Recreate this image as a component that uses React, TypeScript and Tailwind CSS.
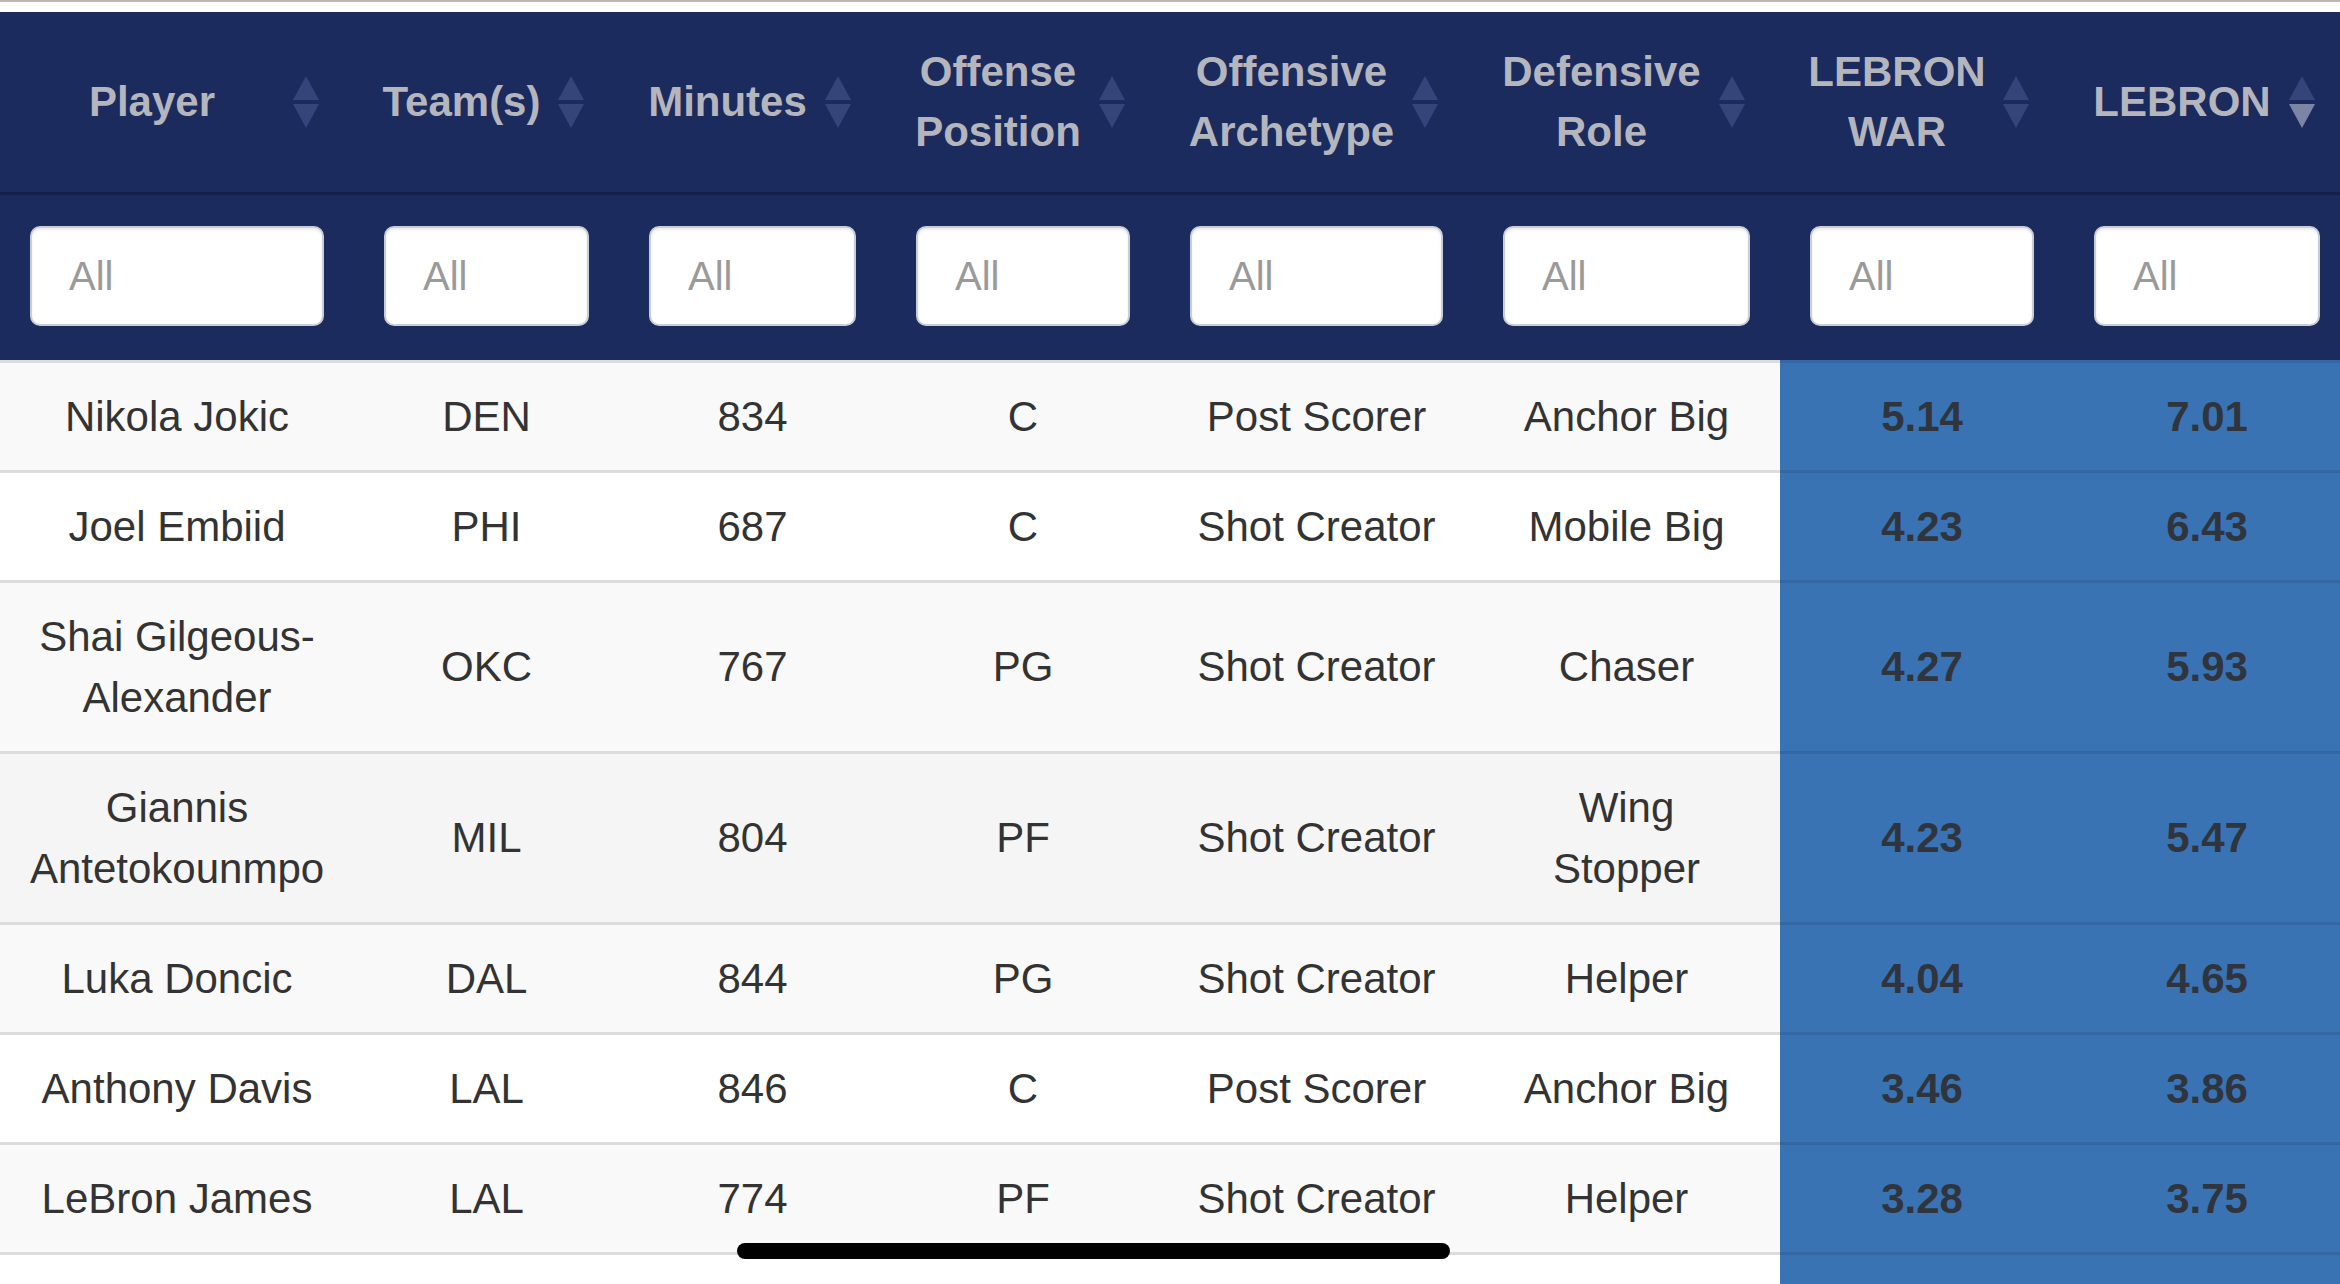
import React from "react";

type Col = { title: string[]; width: number; hl?: boolean; sort?: "desc" };

const cols: Col[] = [
  { title: ["Player"], width: 354 },
  { title: ["Team(s)"], width: 265 },
  { title: ["Minutes"], width: 267 },
  { title: ["Offense", "Position"], width: 274 },
  { title: ["Offensive", "Archetype"], width: 313 },
  { title: ["Defensive", "Role"], width: 307 },
  { title: ["LEBRON", "WAR"], width: 284, hl: true },
  { title: ["LEBRON"], width: 286, hl: true, sort: "desc" },
];

const rows: string[][][] = [
  [["Nikola Jokic"], ["DEN"], ["834"], ["C"], ["Post Scorer"], ["Anchor Big"], ["5.14"], ["7.01"]],
  [["Joel Embiid"], ["PHI"], ["687"], ["C"], ["Shot Creator"], ["Mobile Big"], ["4.23"], ["6.43"]],
  [["Shai Gilgeous-", "Alexander"], ["OKC"], ["767"], ["PG"], ["Shot Creator"], ["Chaser"], ["4.27"], ["5.93"]],
  [["Giannis", "Antetokounmpo"], ["MIL"], ["804"], ["PF"], ["Shot Creator"], ["Wing", "Stopper"], ["4.23"], ["5.47"]],
  [["Luka Doncic"], ["DAL"], ["844"], ["PG"], ["Shot Creator"], ["Helper"], ["4.04"], ["4.65"]],
  [["Anthony Davis"], ["LAL"], ["846"], ["C"], ["Post Scorer"], ["Anchor Big"], ["3.46"], ["3.86"]],
  [["LeBron James"], ["LAL"], ["774"], ["PF"], ["Shot Creator"], ["Helper"], ["3.28"], ["3.75"]],
  [["\u00a0"], ["\u00a0"], ["\u00a0"], ["\u00a0"], ["\u00a0"], ["\u00a0"], ["\u00a0"], ["\u00a0"]],
];

function SortIcon({ active }: { active?: "desc" }) {
  return (
    <svg width="26" height="52" viewBox="0 0 26 52" className="shrink-0">
      <polygon points="13,0 26,24 0,24" fill="#35457a" />
      <polygon points="0,28 26,28 13,52" fill={active === "desc" ? "#7c85a6" : "#35457a"} />
    </svg>
  );
}

function Lines({ lines }: { lines: string[] }) {
  return (
    <>
      {lines.map((l, i) => (
        <div key={i} className="whitespace-nowrap">
          {l}
        </div>
      ))}
    </>
  );
}

export default function App() {
  return (
    <div
      className="relative w-[2340px] h-[1284px] overflow-hidden bg-white"
      style={{ fontFamily: '"Liberation Sans", Arial, Helvetica, sans-serif' }}
    >
      <div className="h-[12px] border-t-2 border-[#b8b8b8] bg-white" />
      <table className="table-fixed border-collapse w-[2350px]">
        <colgroup>
          {cols.map((c, i) => (
            <col key={i} style={{ width: c.width }} />
          ))}
        </colgroup>
        <thead className="bg-[#1b2b5e]">
          <tr className="border-b-[3px] border-[#13204a]">
            {cols.map((c, i) => (
              <th key={i} className="h-[181px] pl-[28px] pr-[35px] py-0 font-bold">
                <div className="flex items-center gap-[17px]">
                  <div className="flex-1 text-center text-[42px] leading-[60px] text-[#b4b5bd]">
                    <Lines lines={c.title} />
                  </div>
                  <SortIcon active={c.sort} />
                </div>
              </th>
            ))}
          </tr>
          <tr className="border-b-[3px] border-[#13204a]">
            {cols.map((c, i) => (
              <th key={i} className="px-[30px] pt-[31px] pb-[34px]">
                <div className="h-[100px] rounded-[10px] border-2 border-[#c9cdd8] bg-white shadow-[inset_0_2px_3px_rgba(0,0,0,0.08)] flex items-center pl-[37px] text-[40px] font-normal text-[#9a9a9a]">
                  All
                </div>
              </th>
            ))}
          </tr>
        </thead>
        <tbody>
          {rows.map((r, ri) => {
            const bg = ri === 3 ? "bg-[#f5f5f5]" : ri % 2 === 0 ? "bg-[#f9f9f9]" : "bg-white";
            return (
              <tr key={ri}>
                {r.map((cell, ci) => {
                  const hl = cols[ci].hl;
                  return (
                    <td
                      key={ci}
                      className={
                        hl
                          ? "bg-[#3973b3] border-t-[3px] border-[#3367a4] px-[8px] py-[23px] text-center align-middle text-[42px] leading-[61px] font-bold text-[#30353d]"
                          : `${bg} border-t-[3px] border-[#dcdcdc] px-[8px] py-[23px] text-center align-middle text-[42px] leading-[61px] text-[#333333]`
                      }
                    >
                      <Lines lines={cell} />
                    </td>
                  );
                })}
              </tr>
            );
          })}
        </tbody>
      </table>
      <div className="absolute left-[737px] top-[1243px] w-[713px] h-[16px] rounded-full bg-black" />
    </div>
  );
}
